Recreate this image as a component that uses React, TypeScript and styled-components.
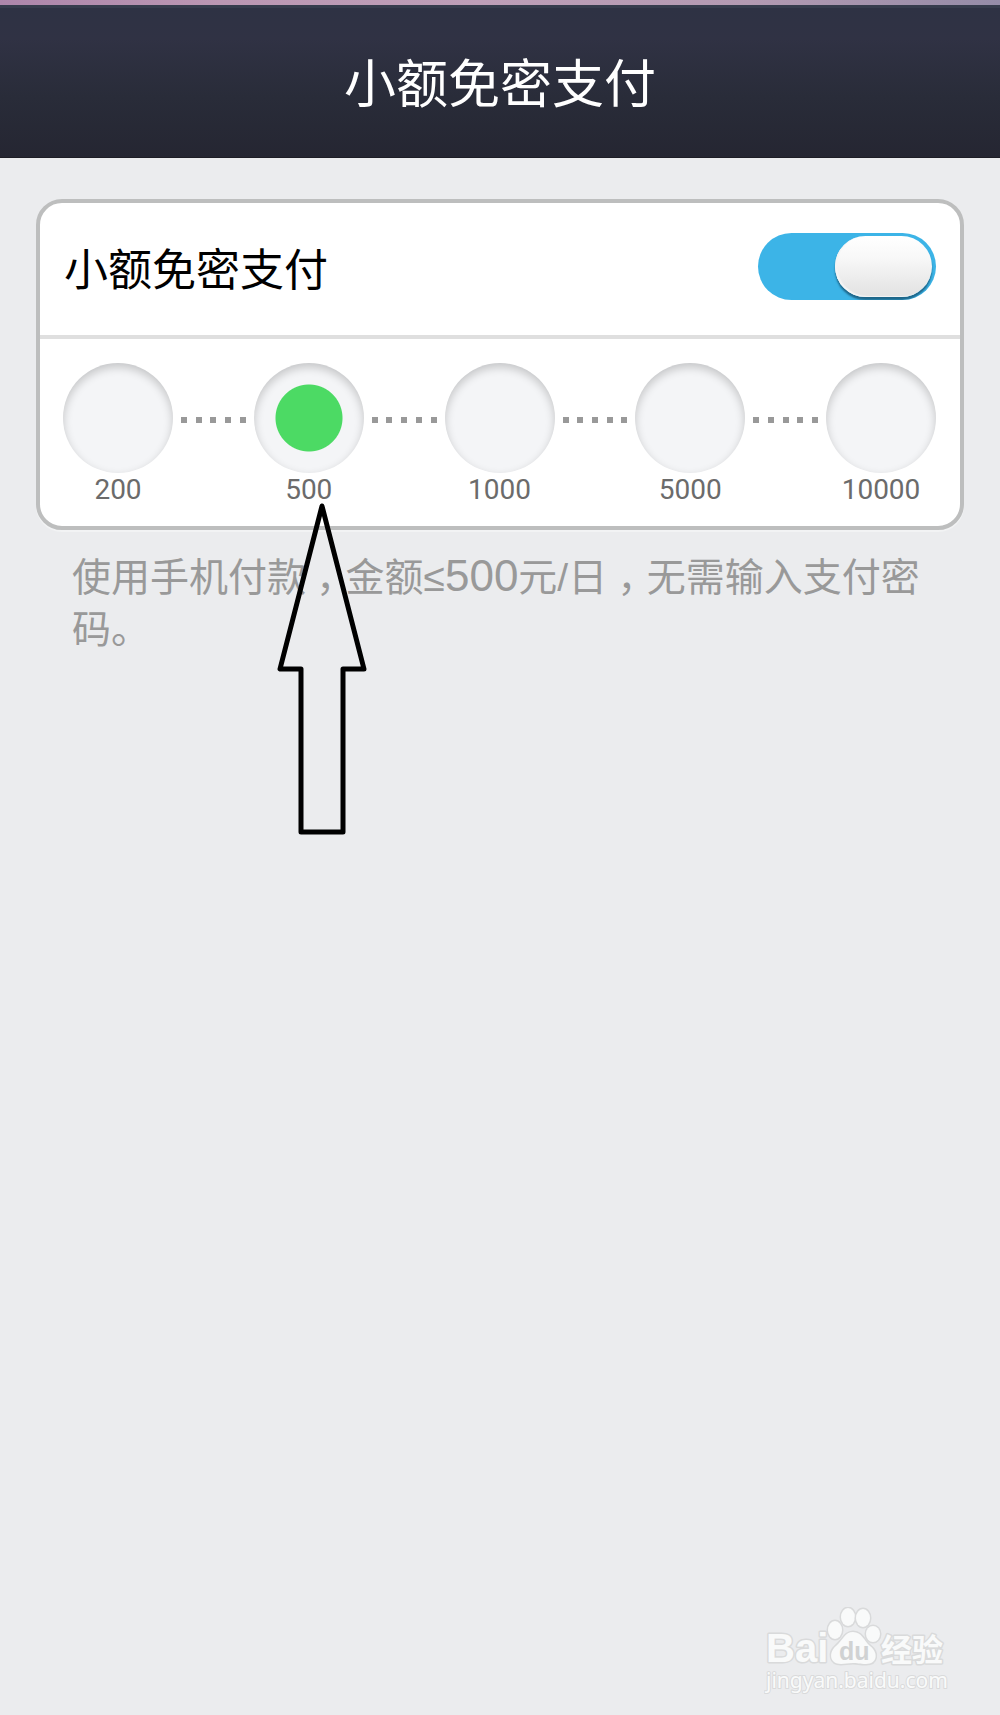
import React, { Fragment, useState } from "react";
import styled, { createGlobalStyle } from "styled-components";

const GlobalStyle = createGlobalStyle`
  *, *::before, *::after { box-sizing: border-box; }
  html { background: #ebecee; }
  body {
    margin: 0;
    font-family: "Noto Sans CJK SC", "Noto Sans", sans-serif;
    color: #000;
  }
`;

const Page = styled.div`
  min-height: 100vh;
  display: flex;
  flex-direction: column;
  background: #ebecee;
`;

const StatusStrip = styled.div`
  height: 5px;
  background: linear-gradient(90deg, #ad86ab 0%, #bb97b3 22%, #be9fb8 48%, #b39ab2 75%, #958ca8 100%);
`;

const Header = styled.header`
  padding: 36px 24px 39px;
  border-top: 3px solid #363c4d;
  border-bottom: 1px solid #1d1d25;
  background: linear-gradient(180deg, #2e3244 0%, #303244 20%, #292c39 60%, #252632 100%);
  text-align: center;
`;

const Title = styled.h1`
  margin: 0;
  font-size: 52px;
  line-height: 74px;
  font-weight: 400;
  color: #fff;
`;

const Main = styled.main`
  position: relative;
  flex: 1;
  padding: 41px 36px 0;
`;

const Card = styled.section`
  border: 4px solid #bdbebe;
  border-radius: 26px;
  background: #fff;
  box-shadow: 0 2px 0 #f2f3f4;
`;

const SwitchRow = styled.div`
  display: flex;
  align-items: center;
  justify-content: space-between;
  padding: 30px 24px 35px;
  border-bottom: 4px solid #dfdfdf;
`;

const SwitchLabel = styled.label`
  font-size: 44px;
  line-height: 64px;
`;

const Switch = styled.input`
  appearance: none;
  display: flex;
  width: 178px;
  height: 67px;
  margin: 0;
  padding: 3px 4px;
  border-radius: 34px;
  overflow: hidden;
  background: #b9bcc0;
  cursor: pointer;

  &::before {
    content: "";
    width: 97px;
    height: 61px;
    border-radius: 31px;
    background: linear-gradient(180deg, #fff 0%, #f8f8f8 35%, #e5e5e5 90%, #e3e3e3 100%);
    box-shadow: 0 3px 2px rgba(10, 50, 75, 0.6), inset 2px -1px 1px #f4f4f4;
  }

  &:checked {
    justify-content: flex-end;
    background: #3cb4e7;
  }
`;

const Limits = styled.fieldset`
  display: flex;
  align-items: flex-start;
  min-width: 0;
  margin: 0;
  padding: 24px 24px 19px 23px;
  border: 0;
`;

const Limit = styled.label`
  display: flex;
  flex-direction: column;
  align-items: center;
  width: 110px;
  font-family: Roboto, sans-serif;
  font-size: 28px;
  line-height: 34px;
  color: #6b6b6b;
`;

const LimitRadio = styled.input`
  appearance: none;
  width: 110px;
  height: 110px;
  margin: 0;
  border-radius: 50%;
  background: #f4f5f7;
  box-shadow: inset 0 4px 10px rgba(0, 0, 0, 0.2);
  cursor: pointer;

  &:checked {
    background: radial-gradient(circle, #4cda64 33px, #f4f5f7 34px);
  }
`;

const Connector = styled.span`
  flex: 1;
  display: flex;
  justify-content: space-between;
  margin: 54px 8px 0;
`;

const Dot = styled.i`
  width: 6px;
  height: 6px;
  background: #999;
`;

const Note = styled.p`
  margin: 0;
  padding: 22px 36px;
  font-family: "Liberation Sans", "Noto Sans CJK SC", sans-serif;
  font-size: 39px;
  line-height: 52px;
  color: #999;
`;

const Amount = styled.span`
  font-size: 44px;
  line-height: 1;
`;

const Comma = styled.span`
  padding: 0 10px;
  font-feature-settings: "halt";
`;

const Arrow = styled.svg`
  position: absolute;
  top: 342px;
  left: 276px;
  width: 92px;
  height: 336px;
  pointer-events: none;
`;

const Watermark = styled.footer`
  align-self: flex-end;
  margin: 0 48px 18px 0;
`;

const WatermarkArt = styled.svg`
  display: block;
  width: 188px;
  height: 90px;
`;

const limits = [200, 500, 1000, 5000, 10000];
const dots = [0, 1, 2, 3, 4];

export default function App() {
  const [enabled, setEnabled] = useState(true);
  const [limit, setLimit] = useState(500);

  return (
    <Page>
      <GlobalStyle />
      <StatusStrip />
      <Header>
        <Title>小额免密支付</Title>
      </Header>
      <Main>
        <Card>
          <SwitchRow>
            <SwitchLabel htmlFor="enabled">小额免密支付</SwitchLabel>
            <Switch
              id="enabled"
              type="checkbox"
              role="switch"
              checked={enabled}
              onChange={(e) => setEnabled(e.target.checked)}
            />
          </SwitchRow>
          <Limits>
            {limits.map((value, index) => (
              <Fragment key={value}>
                {index > 0 && (
                  <Connector>
                    {dots.map((d) => (
                      <Dot key={d} />
                    ))}
                  </Connector>
                )}
                <Limit>
                  <LimitRadio
                    type="radio"
                    name="limit"
                    value={value}
                    checked={limit === value}
                    onChange={() => setLimit(value)}
                  />
                  {value}
                </Limit>
              </Fragment>
            ))}
          </Limits>
        </Card>
        <Note>
          使用手机付款<Comma>，</Comma>金额≤<Amount>{limit}</Amount>元/日<Comma>，</Comma>无需输入支付密码。
        </Note>
        <Arrow viewBox="0 0 92 336" aria-hidden="true">
          <path
            d="M46 6 L4 169 H25 V332 H67 V169 H88 Z"
            fill="none"
            stroke="#000"
            strokeWidth="5"
            strokeLinejoin="round"
          />
        </Arrow>
      </Main>
      <Watermark>
        <WatermarkArt viewBox="-2 0 188 90" aria-hidden="true">
          <g fill="#f9fafa" stroke="#d9dadb" strokeWidth="3" paintOrder="stroke" strokeLinejoin="round">
            <text x="0" y="55" fontFamily="Liberation Sans, sans-serif" fontWeight="700" fontSize="40">Bai</text>
            <ellipse cx="69" cy="23" rx="7" ry="9" />
            <ellipse cx="82" cy="10" rx="7" ry="9" />
            <ellipse cx="97" cy="11" rx="7" ry="9" />
            <ellipse cx="107" cy="27" rx="7" ry="8" />
            <path d="M87 25 C96 25 98 34 104 39 C113 46 111 57 100 57 C94 57 91 56 87 56 C82 56 79 57 75 57 C64 57 62 46 70 39 C77 33 79 25 87 25 Z" />
            <text x="115" y="54" fontFamily="Noto Sans CJK SC, sans-serif" fontWeight="700" fontSize="31">经验</text>
            <text x="0" y="81" fontFamily="Noto Sans, sans-serif" fontSize="21" strokeWidth="2">jingyan.baidu.com</text>
          </g>
          <text x="73" y="53" fontFamily="Liberation Sans, sans-serif" fontWeight="700" fontSize="25" fill="#d0d2d3">du</text>
        </WatermarkArt>
      </Watermark>
    </Page>
  );
}
